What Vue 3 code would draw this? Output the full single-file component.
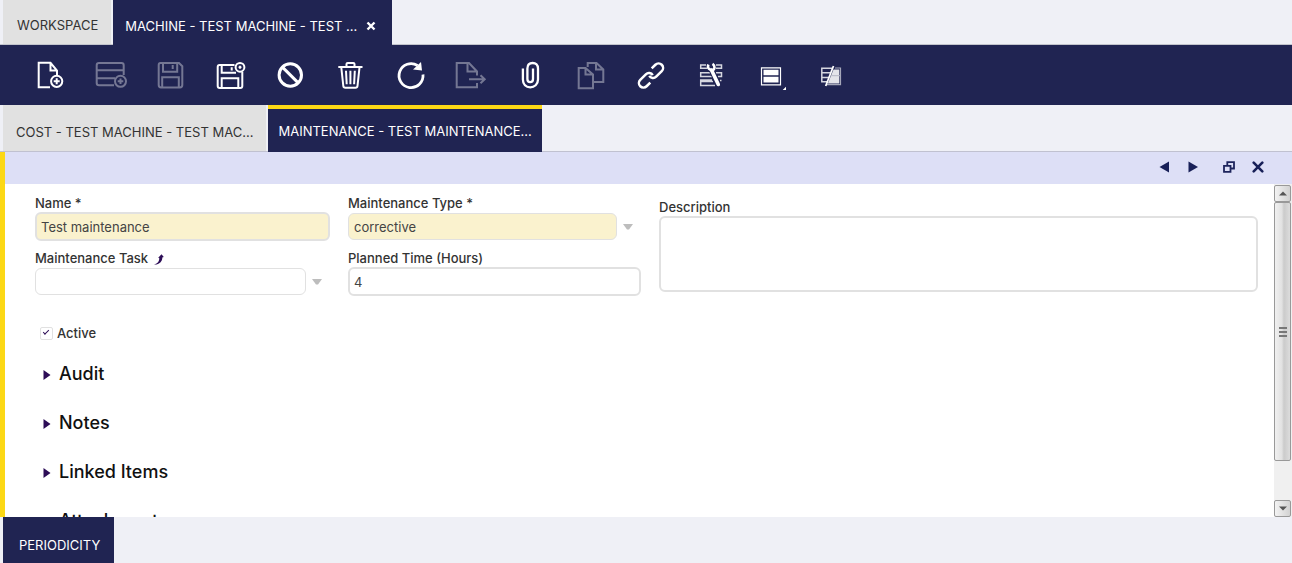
<script setup>
import { ref } from 'vue'

const tools = [
  { id: 'new', label: 'New document' },
  { id: 'row', label: 'New row', off: true },
  { id: 'save', label: 'Save', off: true },
  { id: 'saveclose', label: 'Save and close' },
  { id: 'undo', label: 'Cancel changes' },
  { id: 'trash', label: 'Delete' },
  { id: 'refresh', label: 'Refresh' },
  { id: 'export', label: 'Export', off: true },
  { id: 'clip', label: 'Attachments' },
  { id: 'copy', label: 'Copy', off: true },
  { id: 'link', label: 'Linked items' },
  { id: 'tools', label: 'Process' },
  { id: 'form', label: 'Form view' },
  { id: 'grid', label: 'Personalise grid' },
]
const sections = ['Audit', 'Notes', 'Linked Items', 'Attachments']
const name = ref('Test maintenance')
const type = ref('corrective')
const task = ref('')
const hours = ref('4')
const description = ref('')
const active = ref(true)
</script>

<template>
  <div class="app">
    <nav class="tabs top-tabs" aria-label="Windows">
      <button class="tab">WORKSPACE</button>
      <div class="tab current window-tab">
        <button class="tab-name">MACHINE - TEST MACHINE - TEST ...</button>
        <button class="tab-close" aria-label="Close tab">
          <svg width="10" height="10" viewBox="0 0 10 10"><path d="M1.5 1.5 8.5 8.5M8.5 1.5 1.5 8.5" fill="none" stroke="#fff" stroke-width="2.4" /></svg>
        </button>
      </div>
    </nav>

    <div class="toolbar" role="toolbar" aria-label="Actions">
      <button v-for="t in tools" :key="t.id" class="tool" :disabled="t.off" :aria-label="t.label">
        <svg class="icon" width="30" height="30" viewBox="0 0 30 30">
          <template v-if="t.id === 'new'">
            <path d="M15 27.2H3.7V2.8H15.5L22 10.5V15M15.5 3V10.5H22" />
            <circle cx="21.7" cy="21.3" r="5.6" />
            <path d="M21.7 18.3v6M18.7 21.3h6" />
          </template>
          <template v-else-if="t.id === 'row'">
            <path d="M19 25.3H4Q1.7 25.3 1.7 23V5.2Q1.7 3 4 3H26.5Q28.7 3 28.7 5.2V15M1.7 10.3H28.7M1.7 18.3H20" />
            <circle cx="25.5" cy="21.3" r="5.5" />
            <path d="M25.5 18.5v5.6M22.7 21.3h5.6" />
          </template>
          <template v-else-if="t.id === 'save'">
            <path d="M5.5 3H24L27.3 6.2V25Q27.3 27.4 25 27.4H6Q3.7 27.4 3.7 25V5Q3.7 3 5.5 3ZM8 3V11.7H22.2V3M17.7 5v4M7.2 27.2V17.2H23.8V27.2" />
          </template>
          <template v-else-if="t.id === 'saveclose'">
            <path d="M19.5 5H4.5Q2.7 5 2.7 7V26Q2.7 28 4.7 28H25.3Q27.3 28 27.3 26V12M6.7 5V12.7H21M16.7 7.3v3.2M6.7 28V18.2H23.3V28" />
            <circle cx="25" cy="7.3" r="4.4" />
            <path d="M24 6.3 26 8.3M26 6.3 24 8.3" />
          </template>
          <template v-else-if="t.id === 'undo'">
            <circle cx="15.3" cy="15" r="11.2" stroke-width="3" />
            <path d="M7.4 7.1 23.2 22.9" stroke-width="3" />
          </template>
          <template v-else-if="t.id === 'trash'">
            <path d="M3.3 7H27.5M11.5 6.5V4Q11.5 3 12.7 3H18.3Q19.5 3 19.5 4V6.5M6.3 7.5 8.3 25.8Q8.5 27.7 10.3 27.7H20.5Q22.3 27.7 22.5 25.8L24.5 7.5" />
            <path d="M11 10.7 11.7 24.2M15.4 10.7V24.2M19.8 10.7 19.1 24.2" />
          </template>
          <template v-else-if="t.id === 'refresh'">
            <path d="M28 14.5A12 12 0 1 1 22.5 5.5" stroke-width="2.8" />
            <path d="M26 2 27 10.5 18 9.5Z" class="solid" stroke="none" />
          </template>
          <template v-else-if="t.id === 'export'">
            <path d="M22 15.5V11.5L14 3H1.7V27.2H22V23M12.5 3V11.5H22M14 19.3H29.5M25.5 15.3 29.7 19.3 25.5 23.3" />
          </template>
          <template v-else-if="t.id === 'clip'">
            <path d="M7.9 8.500V19.5C7.9 24.5 11 27.300 15.200 27.300S23 24.500 23 19.500V8.500C23 5 20.800 3 17.700 3S12.400 5 12.400 8.500V19C12.400 21 13.500 22.200 15.200 22.200S18 21 18 19V8.500" stroke-width="2.300" />
          </template>
          <template v-else-if="t.id === 'copy'">
            <path d="M12.7 7V3H21.5L28.3 9.5V22H18.5M21 3V9.5H28.3M10.5 8H3.7V28.3H18V14.5ZM10.5 8V14.5H18" />
          </template>
          <template v-else-if="t.id === 'link'">
            <g transform="rotate(-45 16 15.5)" stroke-width="2.5">
              <path d="M10.5 20H5.3A4.5 4.5 0 0 1 5.3 11H13.2A4.5 4.5 0 0 1 17.5 16.5" />
              <path d="M21.5 11H26.7A4.5 4.5 0 0 1 26.7 20H18.8A4.5 4.5 0 0 1 14.5 14.5" />
            </g>
          </template>
          <template v-else-if="t.id === 'tools'">
            <path d="M11 5H5.7V8.3H12M21 5H26.5V8.300H21M15 12.700H5.700V16.500H17M21 12.700H26.500V16.500H23M17 20H5.700V25.500H20M6 21.500H18M25 20.500H26.500" stroke-width="1.500" stroke="#d5d6df" />
            <path d="M16.500 10 23.500 25" stroke="#202452" stroke-width="5.500" />
            <path d="M16.500 10 23.300 24.500" stroke-width="3.600" stroke-linecap="round" />
            <path d="M13.300 4.500Q12 8.500 15.500 9.800T19.500 7.500Q19.500 5 17.500 3.800" stroke-width="2.600" />
          </template>
          <template v-else-if="t.id === 'form'">
            <path d="M6.5 7.8H25.5V24.8H6.5Z" stroke-width="1.2" />
            <path d="M8.5 9.8H23.5V15.3H8.5ZM8.5 16.8H23.5V22.5H8.5ZM31 26.7V30H27.700Z" class="solid" stroke="none" />
          </template>
          <template v-else>
            <path d="M17.5 8.3H6.800V21.700H12M6.800 12.700H15.500M6.800 17.500H14" stroke-width="1.500" stroke="#d5d6df" />
            <path d="M20 8H25.5V24.7H12" stroke-width="1.2" opacity=".6" />
            <path d="M18.5 9.5H24.3V23.5H12.8Z" class="solid" stroke="none" opacity=".88" />
            <path d="M16 15.7H25" stroke="#b5b7c6" stroke-width="1" />
            <path d="M18.500 6 10.700 26" stroke-width="1.800" />
          </template>
        </svg>
      </button>
    </div>

    <nav class="tabs sub-tabs" aria-label="Records">
      <button class="tab">COST - TEST MACHINE - TEST MAC...</button>
      <button class="tab current marked">MAINTENANCE - TEST MAINTENANCE...</button>
    </nav>

    <main class="panel">
      <header class="panel-bar">
        <button class="bar-btn" aria-label="Previous record"><svg width="12" height="12" viewBox="0 0 12 12"><path d="M11 .5V11.5L1.5 6Z" fill="#182058" /></svg></button>
        <button class="bar-btn" aria-label="Next record"><svg width="12" height="12" viewBox="0 0 12 12"><path d="M1.5 .5V11.5L11 6Z" fill="#182058" /></svg></button>
        <button class="bar-btn restore" aria-label="Restore"><svg width="12" height="12" viewBox="0 0 12 12"><path d="M4.3 4V1.1H11V7.5H8M1 4.8H7.5V10.9H1Z" fill="none" stroke="#1d245c" stroke-width="1.8" /></svg></button>
        <button class="bar-btn" aria-label="Close"><svg width="12" height="12" viewBox="0 0 12 12"><path d="M1.7 1.7 10.3 10.3M10.3 1.7 1.7 10.3" fill="none" stroke="#182058" stroke-width="2.6" stroke-linecap="round" /></svg></button>
      </header>

      <div class="body">
        <form class="form" @submit.prevent>
          <div class="columns">
            <div class="column">
              <div class="field">
                <label for="name">Name *</label>
                <div class="control"><input id="name" v-model="name" class="box thick required" type="text" /></div>
              </div>
              <div class="field">
                <label for="task">Maintenance Task
                  <svg class="jump" width="10" height="11" viewBox="0 0 10 11"><path d="M0 10.5C4 9.500 5.500 7 5.200 3.800L4 4 7.500 .3 9.800 3 8.300 3.500C8.500 7.500 5 11 0 10.500Z" fill="#2d0d57" /></svg>
                </label>
                <div class="control">
                  <select id="task" v-model="task" class="box"><option value=""></option></select>
                  <svg class="arrow" width="10" height="6" viewBox="0 0 10 6"><path d="M0 0H10L6 5.5H4Z" fill="#bdbdbd" /></svg>
                </div>
              </div>
            </div>
            <div class="column">
              <div class="field">
                <label for="type">Maintenance Type *</label>
                <div class="control">
                  <select id="type" v-model="type" class="box required"><option>corrective</option></select>
                  <svg class="arrow" width="10" height="6" viewBox="0 0 10 6"><path d="M0 0H10L6 5.5H4Z" fill="#bdbdbd" /></svg>
                </div>
              </div>
              <div class="field">
                <label for="hours">Planned Time (Hours)</label>
                <div class="control"><input id="hours" v-model="hours" class="box thick" type="text" /></div>
              </div>
            </div>
            <div class="column wide">
              <label for="description">Description</label>
              <textarea id="description" v-model="description" class="box thick"></textarea>
            </div>
          </div>

          <label class="check"><input v-model="active" type="checkbox" />Active</label>

          <button v-for="s in sections" :key="s" type="button" class="section">
            <svg width="8" height="10" viewBox="0 0 8 10"><path d="M.5 0 7.5 5 .5 10Z" fill="#2d0d57" /></svg>{{ s }}
          </button>
        </form>

        <div class="scrollbar">
          <button class="scroll-btn" aria-label="Scroll up"><svg width="8" height="5" viewBox="0 0 8 5"><path d="M4 .5 8 4.5H0Z" fill="#555" /></svg></button>
          <div class="track"><div class="thumb"><i></i><i></i><i></i></div></div>
          <button class="scroll-btn" aria-label="Scroll down"><svg width="8" height="5" viewBox="0 0 8 5"><path d="M0 .5H8L4 4.5Z" fill="#555" /></svg></button>
        </div>
      </div>
    </main>

    <footer class="tabs bottom-tabs">
      <button class="tab current">PERIODICITY</button>
    </footer>
  </div>
</template>

<style>
body { margin: 0; }
</style>

<style scoped>
.app {
  display: flex;
  flex-direction: column;
  height: 100vh;
  overflow: hidden;
  background: #eff0f6;
  color: #333;
  font: 500 13px/18px Inter, "Open Sans", sans-serif;
}
button {
  margin: 0;
  padding: 0;
  border: 0;
  background: none;
  color: inherit;
  font: inherit;
}
.tabs {
  display: flex;
  gap: 2px;
  padding-left: 3px;
  box-sizing: border-box;
  flex: none;
}
.tab {
  display: flex;
  align-items: center;
  box-sizing: border-box;
  background: #e1e1e1;
  white-space: nowrap;
  font-weight: 400;
}
.tab.current { background: #202452; color: #fff; }
.top-tabs { height: 45px; box-shadow: inset 0 -1px #c2c4cc; }
.top-tabs .tab { padding: 6px 13px 0 14px; margin-bottom: 1px; }
.top-tabs .window-tab { margin-bottom: 0; padding: 6px 16px 0 12px; gap: 9px; }
.tab-close { display: flex; }

.toolbar {
  display: flex;
  flex: none;
  height: 60px;
  padding-left: 20px;
  background: #202452;
}
.tool {
  display: flex;
  align-items: center;
  justify-content: center;
  width: 60px;
}
.icon {
  overflow: visible;
  fill: none;
  stroke: #fff;
  stroke-width: 2;
}
.solid { fill: #fff; }
.tool:disabled .icon { opacity: .38; }

.sub-tabs { height: 47px; box-shadow: inset 0 -1px #c0c1d0; }
.sub-tabs .tab { padding: 8px 13px 0; margin-bottom: 1px; }
.sub-tabs .marked { margin-bottom: 0; padding: 0 10px; border-top: 4px solid #fcd815; }

.panel {
  display: flex;
  flex-direction: column;
  flex: 1;
  min-height: 0;
  border-left: 5px solid #fcd815;
  background: #fff;
}
.panel-bar {
  display: flex;
  flex: none;
  align-items: center;
  justify-content: flex-end;
  gap: 17px;
  height: 32px;
  padding: 0 28px 2px 0;
  box-sizing: border-box;
  background: #dddff6;
}
.bar-btn { display: flex; }
.restore { margin-left: 7px; }

.body { display: flex; flex: 1; min-height: 0; }
.form {
  flex: 1;
  min-width: 0;
  padding: 10px 16px 0 30px;
  overflow: hidden;
}
.columns {
  display: grid;
  grid-template-columns: 295fr 293fr 599fr;
  gap: 18px;
}
.column { display: flex; flex-direction: column; gap: 8px; min-width: 0; }
.wide { gap: 0; padding-top: 4px; }
label { display: block; }
.jump { vertical-align: -2px; margin-left: 2px; }
.control { display: flex; align-items: center; gap: 6px; height: 29px; }
.arrow { flex: none; margin-right: 8px; }
.box {
  flex: 1;
  min-width: 0;
  height: 27px;
  margin: 0;
  padding: 0 5px;
  box-sizing: border-box;
  border: 1px solid #e1e1e1;
  border-radius: 6px;
  outline: 0;
  appearance: none;
  background: #fff;
  color: #444;
  font: 400 13px/18px Inter, "Open Sans", sans-serif;
}
.thick { height: 29px; padding: 0 4px; border: 2px solid #e1e1e1; }
.required { background: #faf2ce; }
textarea.box { flex: none; width: 100%; height: 76px; resize: none; }

.check {
  display: flex;
  align-items: center;
  gap: 4px;
  width: max-content;
  margin: 28px 0 7px 5px;
}
.check input {
  width: 13px;
  height: 13px;
  margin: 0;
  border: 1px solid #e1e1e1;
  border-radius: 2px;
  appearance: none;
}
.check input:checked::after {
  content: "";
  display: block;
  width: 5px;
  height: 2px;
  margin: 2px 0 0 2px;
  border: solid #2d0d57;
  border-width: 0 0 1px 1px;
  transform: rotate(-45deg);
}
.section {
  display: flex;
  align-items: center;
  gap: 8px;
  height: 49px;
  padding-left: 8px;
  color: #111;
  font-size: 18px;
  line-height: 24px;
}
.section svg { margin-top: 2px; }

.scrollbar {
  display: flex;
  flex-direction: column;
  width: 17px;
  padding: 1px 1px 0 0;
  background: #f0f0f0;
}
.scroll-btn {
  display: flex;
  align-items: center;
  justify-content: center;
  height: 17px;
  border: 1px solid #999;
  border-radius: 2px;
  background: linear-gradient(90deg, #f3f3f3, #d2d2d2);
}
.track { flex: 1; }
.thumb {
  display: flex;
  flex-direction: column;
  align-items: center;
  justify-content: center;
  gap: 2px;
  height: 87%;
  box-sizing: border-box;
  border: 1px solid #999;
  border-radius: 2px;
  background: linear-gradient(90deg, #f0f0f0, #e2e2e2 45%, #cbcbcb 60%, #dcdcdc);
}
.thumb i { width: 8px; height: 2px; background: #777; }

.bottom-tabs { height: 46px; }
.bottom-tabs .tab { padding: 10px 14px 0 16px; }
</style>
